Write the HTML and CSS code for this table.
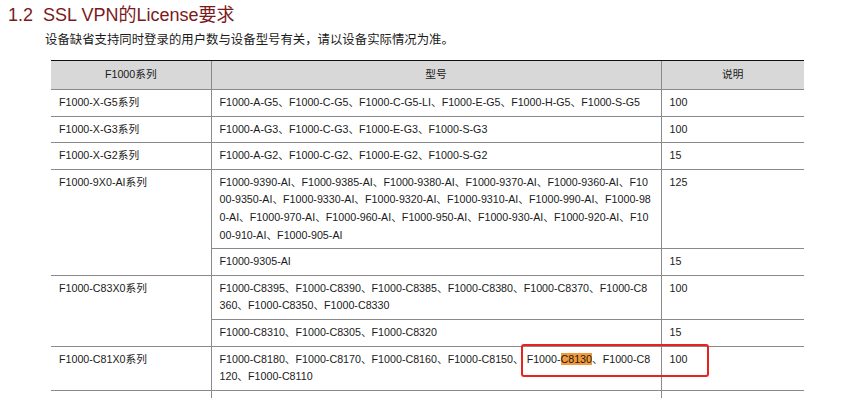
FILE: index.html
```html
<!DOCTYPE html>
<html lang="zh">
<head>
<meta charset="utf-8">
<link rel="stylesheet" href="styles.css">
</head>
<body>
<h2 class="title">1.2&nbsp; SSL VPN的License要求</h2>
<p class="intro">设备缺省支持同时登录的用户数与设备型号有关，请以设备实际情况为准。</p>
<div class="table-wrap">
<table class="lic">
<colgroup><col class="c1"><col class="c2"><col class="c3"></colgroup>
<thead>
<tr><th>F1000系列</th><th>型号</th><th>说明</th></tr>
</thead>
<tbody>
<tr><td>F1000-X-G5系列</td><td>F1000-A-G5、F1000-C-G5、F1000-C-G5-LI、F1000-E-G5、F1000-H-G5、F1000-S-G5</td><td>100</td></tr>
<tr><td>F1000-X-G3系列</td><td>F1000-A-G3、F1000-C-G3、F1000-E-G3、F1000-S-G3</td><td>100</td></tr>
<tr><td>F1000-X-G2系列</td><td>F1000-A-G2、F1000-C-G2、F1000-E-G2、F1000-S-G2</td><td>15</td></tr>
<tr><td rowspan="2">F1000-9X0-AI系列</td><td>F1000-9390-AI、F1000-9385-AI、F1000-9380-AI、F1000-9370-AI、F1000-9360-AI、F1000-9350-AI、F1000-9330-AI、F1000-9320-AI、F1000-9310-AI、F1000-990-AI、F1000-980-AI、F1000-970-AI、F1000-960-AI、F1000-950-AI、F1000-930-AI、F1000-920-AI、F1000-910-AI、F1000-905-AI</td><td>125</td></tr>
<tr><td>F1000-9305-AI</td><td>15</td></tr>
<tr><td rowspan="2">F1000-C83X0系列</td><td>F1000-C8395、F1000-C8390、F1000-C8385、F1000-C8380、F1000-C8370、F1000-C8360、F1000-C8350、F1000-C8330</td><td>100</td></tr>
<tr><td>F1000-C8310、F1000-C8305、F1000-C8320</td><td>15</td></tr>
<tr><td>F1000-C81X0系列</td><td>F1000-C8180、F1000-C8170、F1000-C8160、F1000-C8150、 F1000-<mark class="hl">C8130</mark>、F1000-C8120、F1000-C8110</td><td>100</td></tr>
<tr><td>&nbsp;</td><td>&nbsp;</td><td>&nbsp;</td></tr>
</tbody>
</table>
<div class="redbox"></div>
</div>
</body>
</html>
```
FILE: styles.css
```css
html, body {
  margin: 0;
  padding: 0;
  background: #ffffff;
}
body {
  font-family: "Liberation Sans", "Noto Sans CJK SC", sans-serif;
  color: #1a1a1a;
  overflow: hidden;
}
.title {
  margin: 0;
  padding: 3px 0 0 8px;
  font-size: 18px;
  font-weight: normal;
  line-height: 24px;
  color: #7b1a1a;
}
.intro {
  margin: 0;
  padding: 4px 0 0 45px;
  font-size: 12.4px;
  line-height: 18px;
  color: #1a1a1a;
}
.table-wrap {
  position: relative;
  margin: 11px 0 0 51px;
  width: 753px;
}
.lic {
  border-collapse: collapse;
  table-layout: fixed;
  width: 753px;
  font-size: 10.7px;
  line-height: 17.6px;
}
.c1 { width: 160px; }
.c2 { width: 450px; }
.c3 { width: 143px; }
.lic th {
  background: #d8d8d8;
  font-weight: normal;
  text-align: center;
  height: 28px;
  padding: 0 8px;
  border-top: 1px solid #111111;
  border-bottom: 1px solid #8a8a8a;
  border-left: 1px solid #8a8a8a;
}
.lic td {
  vertical-align: top;
  text-align: left;
  padding: 4px 8px 4px 8px;
  border-bottom: 1px solid #8a8a8a;
  border-left: 1px solid #8a8a8a;
  word-break: break-all;
}
.lic th:first-child,
.lic td:first-child {
  border-left: none;
}
.lic tbody tr:nth-child(5) td:first-child,
.lic tbody tr:nth-child(7) td:first-child {
  border-left: 1px solid #8a8a8a;
}
.hl {
  background: #f39b3c;
  color: #1a1a1a;
}
.redbox {
  position: absolute;
  left: 470px;
  top: 284px;
  width: 184px;
  height: 29px;
  border: 2px solid #e8221e;
  border-radius: 3px;
}
```
